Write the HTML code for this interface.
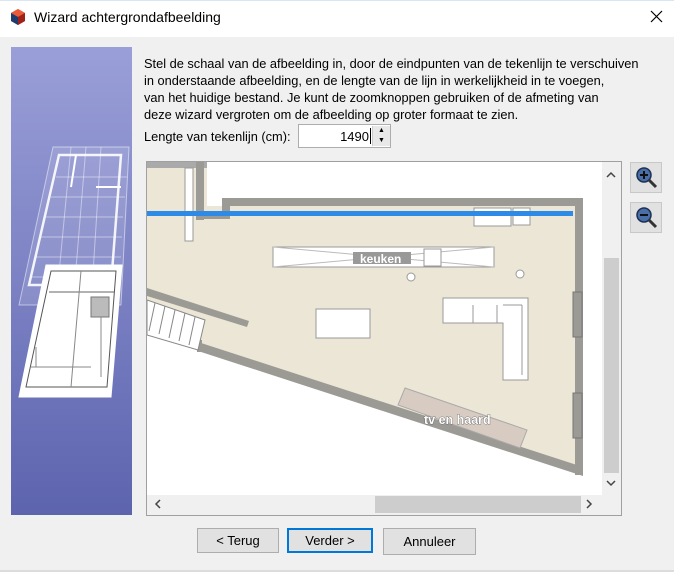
<!DOCTYPE html>
<html><head><style>
body{margin:0;width:674px;height:572px;background:#f0f0f0;font-family:"Liberation Sans",sans-serif;position:relative;overflow:hidden}
.t{position:absolute}
.btn{position:absolute;background:#e1e1e1;border:1px solid #adadad;font-size:13px;text-align:center;line-height:24px;color:#000;box-sizing:border-box}
</style></head><body>
<div class="t" style="left:0;top:0;width:674px;height:36px;background:#fff;border-top:1px solid #d9e6f2"></div>
<svg class="t" style="left:9px;top:8px" width="18" height="18" viewBox="0 0 18 18"><polygon points="9,1 16,5 16,13 9,17 2,13 2,5" fill="#d0261c"/><polygon points="9,1 16,5 9,9 2,5" fill="#ea5b3a"/><polygon points="2,5 9,9 9,17 2,13" fill="#1d3c70"/><polygon points="9,9 16,5 16,13 9,17" fill="#a0201a"/></svg>
<div class="t" style="left:34px;top:9px;font-size:14px;color:#000">Wizard achtergrondafbeelding</div>
<svg class="t" style="left:650px;top:10px" width="13" height="13"><path d="M1,1L12,12M12,1L1,12" stroke="#000" stroke-width="1.2"/></svg>

<div class="t" style="left:11px;top:47px;width:121px;height:468px;background:linear-gradient(#9a9fd8,#5d64ae)">
<svg width="121" height="468" viewBox="0 0 121 468">
<g stroke="#fff" fill="none">
<polygon points="42,100 118,100 110,258 8,258" stroke-opacity="0.5" fill="#fff" fill-opacity="0.12"/>
<polygon points="48,108 110,108 100,238 18,238" stroke-width="2.5" stroke-opacity="0.9"/>
<g stroke-opacity="0.45"><line x1="45" y1="130" x2="116" y2="130"/><line x1="40" y1="150" x2="114" y2="150"/><line x1="35" y1="170" x2="112" y2="170"/><line x1="30" y1="190" x2="111" y2="190"/><line x1="25" y1="210" x2="110" y2="210"/><line x1="20" y1="230" x2="109" y2="230"/>
<line x1="60" y1="100" x2="45" y2="258"/><line x1="75" y1="100" x2="62" y2="258"/><line x1="90" y1="100" x2="80" y2="258"/></g>
<line x1="65" y1="108" x2="60" y2="140" stroke-width="2"/><line x1="85" y1="140" x2="110" y2="140" stroke-width="2"/>
<polygon points="35,218 111,218 100,350 8,350" fill="#fff" stroke="#fff"/>
<polygon points="40,224 105,224 96,340 15,340" stroke="#555"/>
<line x1="38" y1="245" x2="103" y2="245" stroke="#666"/>
<line x1="70" y1="224" x2="60" y2="340" stroke="#888"/>
<rect x="80" y="250" width="18" height="20" stroke="#777" fill="#bbb"/>
<path d="M20,320h60M25,300v20M90,270v60" stroke="#888"/>
</g></svg></div>

<div class="t" style="left:144px;top:55px;font-size:12.8px;line-height:17px;color:#000;white-space:nowrap">Stel de schaal van de afbeelding in, door de eindpunten van de tekenlijn te verschuiven<br>in onderstaande afbeelding, en de lengte van de lijn in werkelijkheid in te voegen,<br>van het huidige bestand. Je kunt de zoomknoppen gebruiken of de afmeting van<br>deze wizard vergroten om de afbeelding op groter formaat te zien.</div>
<div class="t" style="left:144px;top:129px;font-size:12.8px">Lengte van tekenlijn (cm):</div>
<div class="t" style="left:298px;top:124px;width:93px;height:24px;background:#fff;border:1px solid #adadad;box-sizing:border-box"></div>
<div class="t" style="left:339px;top:129px;font-size:13px;width:30px;text-align:right">1490</div>
<div class="t" style="left:370px;top:128px;width:1px;height:16px;background:#000"></div>
<div class="t" style="left:372px;top:126px;width:17px;height:20px;background:#e8e8e8;border-left:1px solid #ccc;font-size:7px;line-height:10px;text-align:center">▲<br>▼</div>

<div class="t" style="left:146px;top:161px;width:476px;height:355px;background:#fff;border:1px solid #a0a0a0;box-sizing:border-box;overflow:hidden">
<svg width="476" height="355" viewBox="146 161 476 355" style="position:absolute;left:-1px;top:-1px">
<polygon points="147,206 575,206 575,470 198,347 147,330" fill="#ebe6d5"/>
<polygon points="147,162 207,162 207,216 147,216" fill="#ebe6d5"/>
<rect x="147" y="162" width="60" height="6" fill="#aaa"/>
<rect x="196" y="162" width="8" height="58" fill="#9c9a95"/>
<rect x="185" y="168" width="8" height="73" fill="#fff" stroke="#999"/>
<path d="M222,198 L583,198 L583,475 L575,475 L575,206 L230,206 L230,219 L199,219 L199,211 L222,211 Z" fill="#9c9a95"/>
<polygon points="198,342 583,467 583,476 198,351" fill="#9c9a95"/>
<rect x="197" y="340" width="5" height="12" fill="#9c9a95"/>
<polygon points="147,288 249,321 247,327 147,296" fill="#9c9a95"/>
<polygon points="147,300 205,320 198,350 147,335" fill="#fff" stroke="#888"/>
<path d="M155,303l-6,28M165,306l-6,28M175,310l-6,28M185,313l-6,28M195,317l-6,28" stroke="#888"/>
<rect x="573" y="292" width="9" height="45" fill="#9c9a95" stroke="#777"/>
<rect x="573" y="393" width="9" height="45" fill="#9c9a95" stroke="#777"/>
<rect x="474" y="208" width="37" height="18" fill="#fff" stroke="#999"/>
<rect x="513" y="208" width="17" height="17" fill="#fff" stroke="#999"/>
<rect x="273" y="247" width="221" height="20" fill="#fff" stroke="#999"/>
<line x1="273" y1="247" x2="494" y2="267" stroke="#bbb"/><line x1="273" y1="267" x2="494" y2="247" stroke="#bbb"/>
<rect x="353" y="252" width="58" height="12" fill="#999"/>
<rect x="424" y="249" width="17" height="17" fill="#fff" stroke="#999"/>
<text x="360" y="263" font-size="12" font-weight="bold" fill="#fff" font-family="Liberation Sans">keuken</text>
<circle cx="411" cy="277" r="4" fill="#fff" stroke="#999"/><circle cx="520" cy="274" r="4" fill="#fff" stroke="#999"/>
<rect x="316" y="309" width="54" height="29" fill="#fff" stroke="#999"/>
<path d="M443,298 L528,298 L528,380 L503,380 L503,323 L443,323 Z" fill="#fff" stroke="#999"/>
<line x1="473" y1="305" x2="473" y2="323" stroke="#999"/><line x1="497" y1="305" x2="497" y2="323" stroke="#999"/>
<line x1="503" y1="305" x2="522" y2="305" stroke="#999"/><line x1="522" y1="305" x2="522" y2="375" stroke="#999"/>
<polygon points="405,388 527,430 520,448 398,405" fill="#d8ccc2" stroke="#aaa"/>
<text x="424" y="424" font-size="12.5" font-weight="bold" fill="#fff" stroke="#666" stroke-width="0.8" paint-order="stroke" font-family="Liberation Sans">tv en haard</text>
<rect x="147" y="211" width="426" height="5" fill="#2d8ae6"/>
<rect x="602" y="162" width="19" height="333" fill="#f0f0f0"/>
<rect x="604" y="258" width="15" height="215" fill="#cdcdcd"/>
<rect x="147" y="495" width="474" height="20" fill="#f0f0f0"/>
<rect x="375" y="496" width="206" height="17" fill="#cdcdcd"/>
<path d="M607,177l4,-4l4,4" stroke="#444" stroke-width="1.5" fill="none"/>
<path d="M607,481l4,4l4,-4" stroke="#444" stroke-width="1.5" fill="none"/>
<path d="M160,500l-4,4l4,4" stroke="#444" stroke-width="1.5" fill="none"/>
<path d="M587,500l4,4l-4,4" stroke="#444" stroke-width="1.5" fill="none"/>
</svg></div>

<div class="t" style="left:630px;top:162px;width:32px;height:31px;background:#e1e1e1;border:1px solid #c8c8c8;box-sizing:border-box">
<svg width="30" height="29"><circle cx="13" cy="12" r="7" fill="#4a6fa8" stroke="#1d2f55" stroke-width="1.5"/><line x1="18" y1="17" x2="25" y2="24" stroke="#333" stroke-width="3"/><path d="M9,12h8M13,8v8" stroke="#111" stroke-width="2"/></svg></div>
<div class="t" style="left:630px;top:202px;width:32px;height:31px;background:#e1e1e1;border:1px solid #c8c8c8;box-sizing:border-box">
<svg width="30" height="29"><circle cx="13" cy="12" r="7" fill="#4a6fa8" stroke="#1d2f55" stroke-width="1.5"/><line x1="18" y1="17" x2="25" y2="24" stroke="#333" stroke-width="3"/><path d="M9,12h8" stroke="#111" stroke-width="2"/></svg></div>

<div class="btn" style="left:197px;top:528px;width:82px;height:25px">&lt; Terug</div>
<div class="btn" style="left:287px;top:528px;width:86px;height:25px;border:2px solid #0078d7;line-height:21px">Verder &gt;</div>
<div class="btn" style="left:383px;top:528px;width:93px;height:27px;line-height:26px">Annuleer</div>
<div class="t" style="left:0;top:570px;width:674px;height:2px;background:#dcdcdc"></div>
</body></html>
